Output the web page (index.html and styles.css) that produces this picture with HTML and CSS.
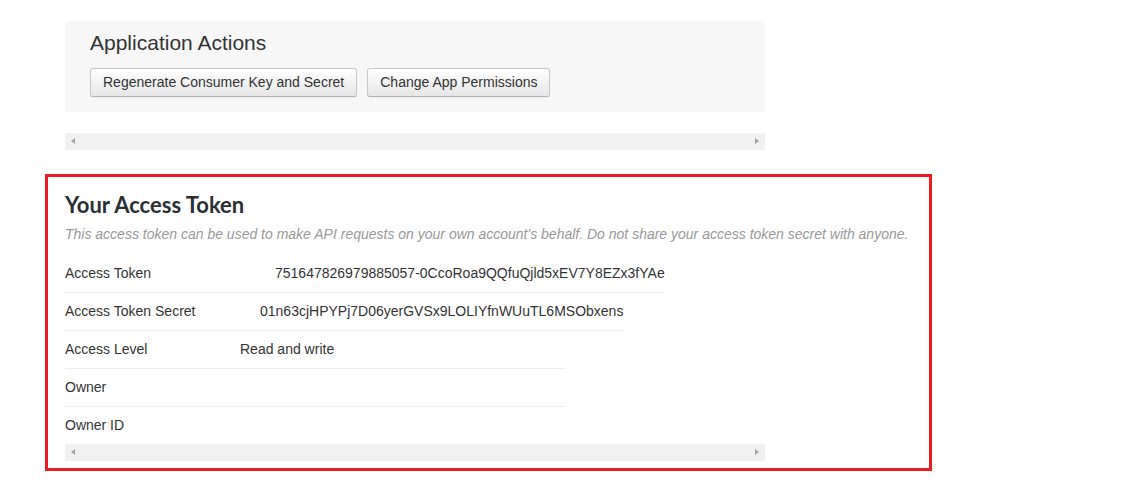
FILE: index.html
```html
<!DOCTYPE html>
<html lang="en">
<head>
<meta charset="utf-8">
<title>Application Actions</title>
<link rel="stylesheet" href="styles.css">
</head>
<body>
<div class="page">
  <div class="panel">
    <h3 class="panel-title">Application Actions</h3>
    <div class="actions">
      <button class="btn">Regenerate Consumer Key and Secret</button>
      <button class="btn">Change App Permissions</button>
    </div>
  </div>
  <div class="hscroll"><span class="arr arr-left"></span><span class="arr arr-right"></span></div>

  <section class="token-box">
    <h2 class="token-title">Your Access Token</h2>
    <p class="token-note">This access token can be used to make API requests on your own account's behalf. Do not share your access token secret with anyone.</p>
    <div class="rows">
      <div class="row row-token"><span class="label label-token">Access Token</span><span class="value">751647826979885057-0CcoRoa9QQfuQjld5xEV7Y8EZx3fYAe</span></div>
      <div class="row row-secret"><span class="label label-secret">Access Token Secret</span><span class="value">01n63cjHPYPj7D06yerGVSx9LOLIYfnWUuTL6MSObxens</span></div>
      <div class="row row-short"><span class="label label-short">Access Level</span><span class="value">Read and write</span></div>
      <div class="row row-short"><span class="label label-short">Owner</span><span class="value"></span></div>
      <div class="row row-short row-last"><span class="label label-short">Owner ID</span><span class="value"></span></div>
    </div>
    <div class="hscroll hscroll-inner"><span class="arr arr-left"></span><span class="arr arr-right"></span></div>
  </section>
</div>
</body>
</html>
```

FILE: styles.css
```css
* { box-sizing: border-box; }
html, body { margin: 0; padding: 0; background: #fff; }
body {
  font-family: "Liberation Sans", Arial, Helvetica, sans-serif;
  font-size: 14px;
  line-height: 20px;
  color: #333;
}
.page {
  padding: 21px 0 0 45px;
}
.panel {
  margin-left: 20px;
  width: 700px;
  background: #f7f7f7;
  border-radius: 4px;
  padding: 9px 25px 15px;
}
.panel-title {
  margin: 0;
  font-size: 21px;
  line-height: 25px;
  font-weight: normal;
  color: #333;
}
.actions {
  display: flex;
  gap: 10px;
  margin-top: 13px;
}
.btn {
  font-family: "Liberation Sans", Arial, Helvetica, sans-serif;
  font-size: 14px;
  line-height: 19px;
  color: #333;
  padding: 4px 12px;
  border: 1px solid #c8c8c8;
  border-bottom-color: #b3b3b3;
  border-radius: 3px;
  background: linear-gradient(to bottom, #ffffff, #e6e6e6);
  box-shadow: inset 0 1px 0 rgba(255,255,255,.2), 0 1px 2px rgba(0,0,0,.05);
  cursor: pointer;
}
.hscroll {
  position: relative;
  margin: 21px 0 0 20px;
  width: 700px;
  height: 17px;
  background: #f1f1f1;
}
.hscroll-inner {
  margin: 0;
}
.arr {
  position: absolute;
  top: 5px;
  width: 0;
  height: 0;
  border-top: 3.5px solid transparent;
  border-bottom: 3.5px solid transparent;
}
.arr-left { left: 6px; border-right: 4px solid #a3a3a3; }
.arr-right { right: 6px; border-left: 4px solid #a3a3a3; }

.token-box {
  margin-top: 24px;
  width: 887px;
  border: 3px solid #ec1c24;
  padding: 15px 0 7px 17px;
}
.token-title {
  margin: 0;
  font-family: Lato, "Open Sans", sans-serif;
  font-weight: 700;
  font-size: 22px;
  line-height: 26px;
  color: #292f33;
}
.token-note {
  margin: 6px 0 0;
  font-style: italic;
  color: #999;
  white-space: nowrap;
}
.rows {
  margin-top: 11px;
}
.row {
  display: flex;
  padding: 8px 0 9px;
  border-bottom: 1px solid #eeeeee;
}
.row-last { border-bottom: none; }
.row-token { width: 599px; }
.row-secret { width: 558px; }
.row-short { width: 500px; }
.label { flex: none; }
.label-token { width: 210px; }
.label-secret { width: 195px; }
.label-short { width: 175px; }
.value { white-space: nowrap; }
```
